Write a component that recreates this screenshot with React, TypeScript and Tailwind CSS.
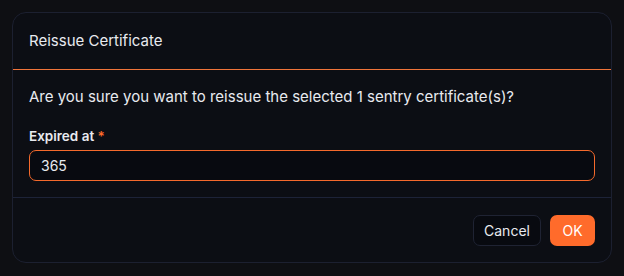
import React from 'react';

export const App: React.FC = () => {
  return (
    <div className="min-h-screen bg-[#0e0f13] p-3 font-['Inter',sans-serif] text-[#e8eaef]">
      <div className="w-[600px] rounded-[14px] border border-[#1c2030] bg-[#0c0e14]">
        <div className="flex h-[57px] items-center border-b border-[#f0743a] px-4 text-[15px]">
          Reissue Certificate
        </div>
        <div className="border-b border-[#1d2338] px-4 pb-[16px] pt-[17px]">
          <p className="text-[15px] leading-5">
            Are you sure you want to reissue the selected 1 sentry certificate(s)?
          </p>
          <div className="mt-[21px] text-[13.5px] font-semibold leading-4">
            Expired at <span className="text-[#ff6b2b]">*</span>
          </div>
          <input
            defaultValue="365"
            className="mt-[6px] h-[31px] w-full rounded-[7px] border border-[#f56a2c] bg-[#080a10] px-[11px] text-[14px] text-[#e8eaef] outline-none"
          />
        </div>
        <div className="flex justify-end gap-[9px] px-4 pb-4 pt-[17px]">
          <button className="h-[31px] w-[68px] rounded-[7px] border border-[#1f2333] bg-[#080a10] text-[14px] text-[#e8eaef]">
            Cancel
          </button>
          <button className="h-[31px] w-[45px] rounded-[7px] bg-[#ff6b2b] text-[14px] text-white">
            OK
          </button>
        </div>
      </div>
    </div>
  );
};

export default App;
